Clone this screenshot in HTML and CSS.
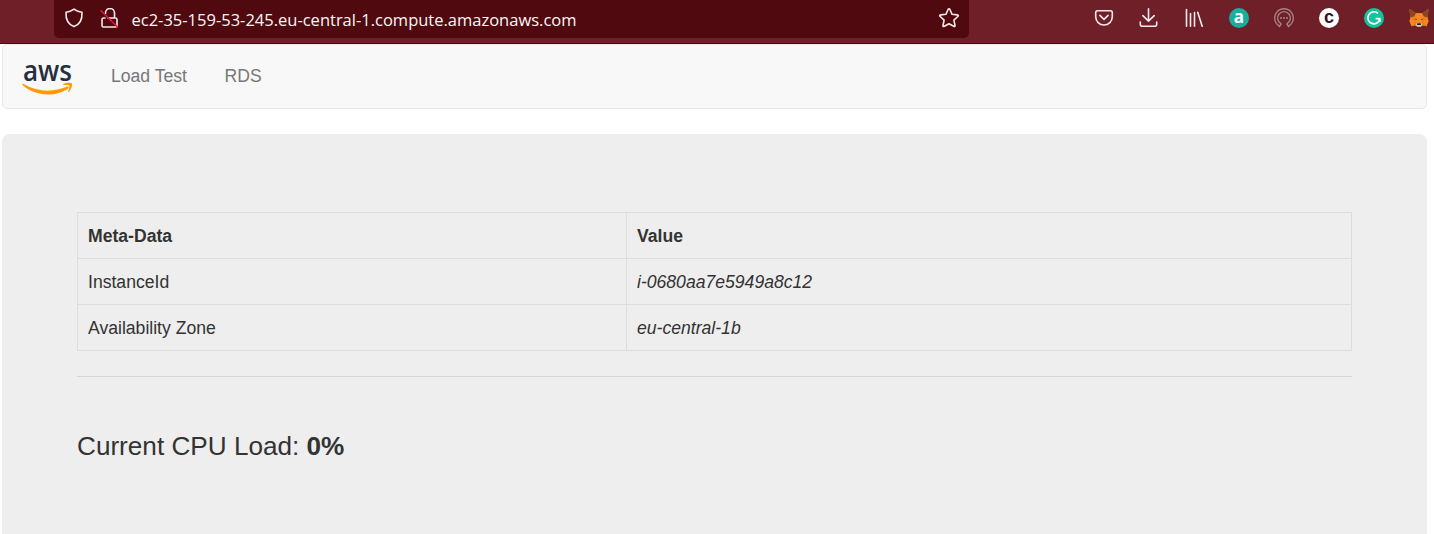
FILE: index.html
```html
<!DOCTYPE html>
<html lang="en">
<head>
<meta charset="utf-8">
<title>Load Test</title>
<link rel="stylesheet" href="styles.css">
</head>
<body>
<header class="toolbar">
  <div class="address">
    <svg class="icon shield" width="20" height="20" viewBox="0 0 20 20"><path d="M10 1.100C7.700 2.800 5 3.800 2 4.200c-.4 6.800 1.700 12 8 14.400 6.300-2.400 8.400-7.600 8-14.400-3-.4-5.700-1.400-8-3.100z"/></svg>
    <svg class="icon lock" width="20" height="22" viewBox="0 0 20 22"><path d="M5.500 5.500V5a4.500 4.500 0 0 1 9 0v4.500M8 10h7.500q1.500 0 1.500 1.500v6q0 1.500-1.500 1.500h-12q-1.500 0-1.500-1.500v-6q0-1.500 1.500-1.500H5"/><path class="slash" d="M1 2.700l16.500 16.300"/></svg>
    <span class="url">ec2-35-159-53-245.eu-central-1.compute.amazonaws.com</span>
    <svg class="icon star" width="22" height="22" viewBox="0 0 22 22"><path d="M10.100 2.500q.9-1.600 1.800 0l2.200 4.800 5.200.6q1.700.3.500 1.600l-3.900 3.600 1.100 5.300q.2 1.700-1.300.9L11 16.700l-4.700 2.600q-1.500.8-1.300-.9l1.100-5.300-3.900-3.600q-1.200-1.300.5-1.600l5.200-.6z"/></svg>
  </div>
  <div class="actions">
    <svg class="icon" width="20" height="20" viewBox="0 0 20 20"><path d="M3.500 2.700h13q1.800 0 1.800 1.800v4.200a8.300 8.300 0 0 1-16.600 0V4.500q0-1.800 1.800-1.800z"/><path d="M5.900 7.400L10 11.300l4.100-3.900"/></svg>
    <svg class="icon" width="20" height="20" viewBox="0 0 20 20"><path d="M9.500 .8v12.100M3.800 7.700L9.500 13.100l5.700-5.400M1.300 14v2.200q0 2 2 2h12.400q2 0 2-2V14"/></svg>
    <svg class="icon" width="20" height="20" viewBox="0 0 20 20"><path d="M2.500 1.500v16.800M6.500 5.500v12.800M10.500 4.500v13.800M13.700 4.300l4.500 14"/></svg>
    <svg width="20" height="20" viewBox="0 0 20 20"><circle cx="10" cy="10" r="10" fill="#19af9d"/><text class="badge serif" x="10" y="15">a</text></svg>
    <svg class="broadcast" width="20" height="20" viewBox="0 0 20 20"><path d="M6 18.500a9.300 9.300 0 1 1 8 0M6.800 15.600a6.400 6.400 0 1 1 6.400 0M5 19l2.500-3.500M15 19l-2.500-3.500"/><path class="dots" d="M6 10h2M9 10h2M12 10h2"/></svg>
    <svg width="20" height="20" viewBox="0 0 20 20"><circle cx="10" cy="10" r="10" fill="#fff"/><text class="badge dark" x="10" y="15">c</text></svg>
    <svg width="20" height="20" viewBox="0 0 20 20"><circle cx="10" cy="10" r="10" fill="#15c39a"/><path class="gram" d="M14 5.400a6 6 0 1 0 1.800 5.300h-4.200M15.800 10.700V14"/></svg>
    <svg width="20" height="20" viewBox="0 0 20 20"><path fill="#e57d23" d="M.5 1L7 5.300h6L19.500 1l-.8 9 .8 3-2 5.300-4.500-.8-1.600 1.200H8.600L7 17.500l-4.500.8L.5 13l.8-3z"/><path fill="#8b4520" d="M.5 1L7 5.300l-2 3.200-3.700.7zM19.500 1L13 5.300l2 3.200 3.700.7z"/><path fill="#f6881f" d="M7 5.300h6l2 6-3 4H8l-3-4zM.5 13l1.500-3.500 4 5-3.500 3.800zM19.500 13L18 9.500l-4 5 3.500 3.800z"/><path fill="#7a4a30" d="M5.500 10.400l2.500.7v1H6.500zM14.500 10.400l-2.500.7v1h1.500z"/><path fill="#d8c4b4" d="M7 15.200h6l.4 2.300-1.900 1.300h-3l-1.900-1.300z"/><path fill="#252025" d="M8.300 15.200h3.400l.4 1.800H7.900z"/></svg>
  </div>
</header>
<nav class="navbar">
  <svg class="logo" width="52" height="40" viewBox="0 0 52 40"><text class="logo-text" x="1" y="24" textLength="49" lengthAdjust="spacingAndGlyphs">aws</text><path fill="#f90" d="M.3 27.200q.4-.7 1.200-.3c14 8.100 29.300 8.800 43.600 2.700 1.600-.6 2.500.7 1.100 1.800C34 40 13.300 40 .5 28.100q-.4-.5-.2-.9z"/><path fill="#f90" d="M41.300 27.300c2.700-1.600 7.500-1.900 8.500-.7 1 1.400-.6 6.200-3 8.300-.6.500-1 .2-.7-.5.800-1.900 1.800-4.700 1.200-5.700-.6-.9-3.600-.7-5.500-.5-.8.100-1-.5-.5-.9z"/></svg>
  <a class="link">Load Test</a>
  <a class="link">RDS</a>
</nav>
<main class="jumbotron">
  <table class="meta">
    <tr><th class="key">Meta-Data</th><th>Value</th></tr>
    <tr><td>InstanceId</td><td><i>i-0680aa7e5949a8c12</i></td></tr>
    <tr><td>Availability Zone</td><td><i>eu-central-1b</i></td></tr>
  </table>
  <hr class="rule">
  <p class="load">Current CPU Load: <b>0%</b></p>
</main>
</body>
</html>
```
FILE: styles.css
```css
* { box-sizing: border-box; }
body {
  margin: 0;
  height: 534px;
  overflow: hidden;
  background: #fff;
  color: #333;
  font: 17.600px/25px "Liberation Sans", Arial, sans-serif;
}
.toolbar {
  display: flex;
  justify-content: space-between;
  height: 44px;
  padding-left: 54px;
  background: #6e1f28;
  border-bottom: 1px solid #4c080e;
}
.address {
  display: flex;
  width: 915px;
  height: 38px;
  padding: 0 9px 0 10px;
  background: #50090f;
  border-radius: 0 0 5px 5px;
}
.icon {
  flex: none;
  fill: none;
  stroke: #f7e9eb;
  stroke-width: 1.600;
  stroke-linecap: round;
  stroke-linejoin: round;
}
.shield { margin-top: 8px; }
.lock { margin: 8px 0 0 16px; }
.slash { stroke: #e6143f; }
.url {
  margin-left: 11.500px;
  flex: 1;
  color: #fbf6f6;
  font: 16.500px/22px "Open Sans", sans-serif;
  padding-top: 9px;
  white-space: nowrap;
}
.star { margin-top: 7px; }
.actions {
  display: flex;
  gap: 25px;
  padding: 8px 5px 0 0;
}
.badge {
  font: bold 16px "Liberation Sans", sans-serif;
  text-anchor: middle;
  fill: #fff;
}
.actions svg, .logo { overflow: visible; }
.serif { font: bold 17px "Open Sans", sans-serif; }
.dark { font-size: 18px; fill: #351519; }
.broadcast { fill: none; stroke: #a78184; stroke-width: 1.400; }
.dots { stroke-width: 1.600; }
.gram { fill: none; stroke: #fff; stroke-width: 1.700; }
.navbar {
  display: flex;
  width: 1425px;
  height: 65px;
  margin-left: 2px;
  padding-left: 19px;
  background: #f8f8f8;
  border: 1px solid #e7e7e7;
  border-radius: 5px;
}
.logo { margin: 12px 37px 0 0; }
.logo-text {
  font: 600 29px/1 "Open Sans", sans-serif;
  fill: #252f3e;
}
.link {
  margin-right: 37.500px;
  padding-top: 19px;
  color: #777;
}
.jumbotron {
  width: 1425px;
  height: 420px;
  margin: 25px 0 0 2px;
  padding: 78px 75px 0;
  background: #eee;
  border-radius: 8px;
}
.meta {
  width: 1275px;
  table-layout: fixed;
  border-collapse: collapse;
}
.meta th, .meta td {
  height: 46px;
  padding: 2px 10px 0;
  border: 1px solid #ddd;
  text-align: left;
}
.key { width: 549px; }
.rule {
  height: 1px;
  margin: 25px 0 50px;
  border: 0;
  background: #d5d5d5;
}
.load {
  margin: 0;
  font-size: 26.150px;
  line-height: 38px;
}
```
